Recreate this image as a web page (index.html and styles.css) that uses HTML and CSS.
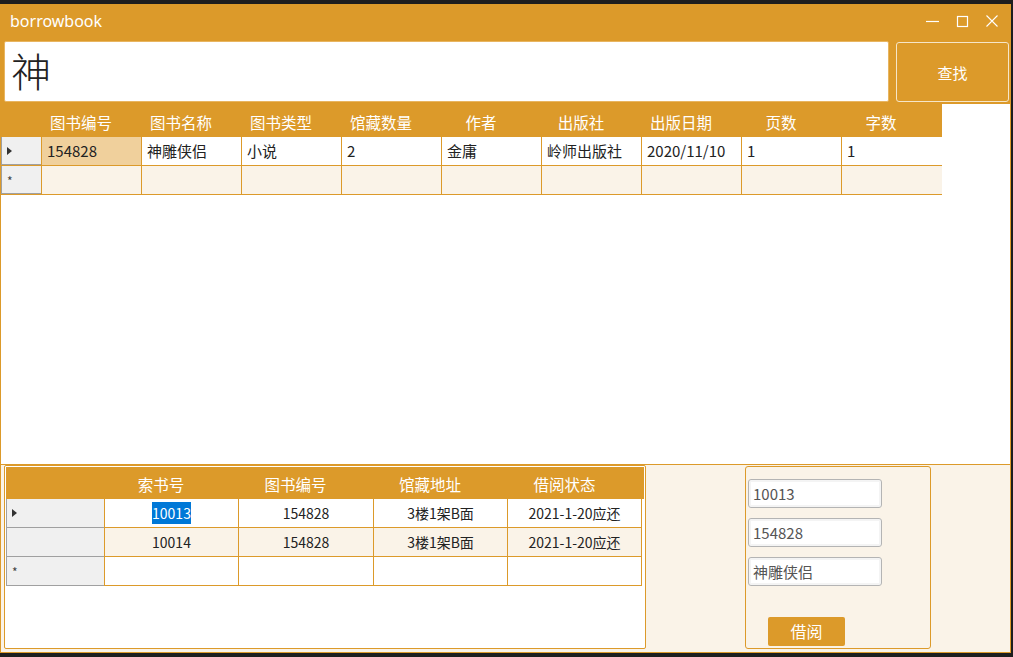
FILE: index.html
```html
<!DOCTYPE html>
<html lang="zh">
<head>
<meta charset="utf-8">
<title>borrowbook</title>
<link rel="stylesheet" href="styles.css">
</head>
<body>
<div class="window">
  <div class="titlebar">
    <span class="title">borrowbook</span>
    <div class="controls">
      <svg class="ctl" width="30" height="20" viewBox="0 0 30 20"><path d="M9 10.5H22" stroke="#fff" stroke-width="1.2"/></svg>
      <svg class="ctl" width="30" height="20" viewBox="0 0 30 20"><rect x="10.5" y="5.5" width="10" height="10" fill="none" stroke="#fff" stroke-width="1.2"/></svg>
      <svg class="ctl" width="30" height="20" viewBox="0 0 30 20"><path d="M9.5 4.5L20.5 15.5M20.5 4.5L9.5 15.5" stroke="#fff" stroke-width="1.1"/></svg>
    </div>
  </div>
  <div class="searchrow">
    <div class="searchbox">神</div>
    <div class="searchbtn">查找</div>
  </div>
  <div class="main">
    <div class="grid top">
      <div class="row head">
        <div class="rh"></div>
        <div class="c">图书编号</div><div class="c">图书名称</div><div class="c">图书类型</div>
        <div class="c">馆藏数量</div><div class="c">作者</div><div class="c">出版社</div>
        <div class="c">出版日期</div><div class="c">页数</div><div class="c">字数</div>
      </div>
      <div class="row">
        <div class="rh"><span class="tri"></span></div>
        <div class="c sel">154828</div><div class="c">神雕侠侣</div><div class="c">小说</div>
        <div class="c">2</div><div class="c">金庸</div><div class="c">岭师出版社</div>
        <div class="c">2020/11/10</div><div class="c">1</div><div class="c">1</div>
      </div>
      <div class="row new">
        <div class="rh"><span class="star">*</span></div>
        <div class="c"></div><div class="c"></div><div class="c"></div>
        <div class="c"></div><div class="c"></div><div class="c"></div>
        <div class="c"></div><div class="c"></div><div class="c"></div>
      </div>
    </div>
  </div>
  <div class="bottom">
    <div class="groupleft">
      <div class="grid low">
        <div class="row head">
          <div class="rh"></div>
          <div class="c">索书号</div><div class="c">图书编号</div><div class="c">馆藏地址</div><div class="c">借阅状态</div>
        </div>
        <div class="row">
          <div class="rh"><span class="tri"></span></div>
          <div class="c"><span class="hl">10013</span></div><div class="c">154828</div>
          <div class="c">3楼1架B面</div><div class="c">2021-1-20应还</div>
        </div>
        <div class="row alt">
          <div class="rh"></div>
          <div class="c">10014</div><div class="c">154828</div>
          <div class="c">3楼1架B面</div><div class="c">2021-1-20应还</div>
        </div>
        <div class="row">
          <div class="rh"><span class="star">*</span></div>
          <div class="c"></div><div class="c"></div><div class="c"></div><div class="c"></div>
        </div>
      </div>
    </div>
    <div class="groupright">
      <div class="tb">10013</div>
      <div class="tb">154828</div>
      <div class="tb">神雕侠侣</div>
      <div class="borrow">借阅</div>
    </div>
  </div>
</div>
</body>
</html>
```

FILE: styles.css
```css
* { box-sizing: border-box; }
html, body { margin: 0; padding: 0; }
body {
  background: #1e1e1e;
  width: 1013px;
  height: 657px;
  overflow: hidden;
  font-family: "Noto Sans CJK SC", "Noto Sans", sans-serif;
}
.window {
  margin-top: 4px;
  width: 1011px;
  height: 649px;
  background: #dc9a2a;
  border: 1px solid #dc9a2a;
  border-top: 0;
  display: flex;
  flex-direction: column;
}
.titlebar {
  height: 37px;
  flex-shrink: 0;
  display: flex;
  align-items: center;
  justify-content: space-between;
  padding-left: 9px;
}
.title {
  color: #fff;
  font-family: "Noto Sans", sans-serif;
  font-size: 16px;
  margin-top: -3px;
}
.controls { display: flex; padding-right: 3px; margin-top: -3px; }
.ctl { display: block; }
.searchrow {
  height: 63px;
  flex-shrink: 0;
  display: flex;
  align-items: stretch;
  padding: 0 1px 2px 3px;
  gap: 7px;
}
.searchbox {
  width: 885px;
  background: #fff;
  border: 1px solid #e8b560;
  border-radius: 2px;
  font-size: 40px;
  line-height: 56px;
  padding-left: 6px;
  color: #222;
  font-weight: 300;
}
.searchbtn {
  width: 113px;
  margin-top: 1px;
  border: 1px solid #f6e6c8;
  border-radius: 3px;
  color: #fff;
  font-size: 15px;
  display: flex;
  align-items: center;
  justify-content: center;
}
.main {
  height: 361px;
  flex-shrink: 0;
  background: #fff;
  border-bottom: 1px solid #dc9a2a;
}
.grid { display: flex; flex-direction: column; }
.row { display: flex; }
.top { width: 941px; }
.top .row { height: 29px; border-bottom: 1px solid #dc9a2a; }
.top .row.head { height: 33px; border-bottom: 0; background: #dc9a2a; }
.top .rh { width: 40px; }
.top .c {
  width: 100px;
  font-size: 15px;
  color: #222;
  line-height: 28px;
  padding-left: 5px;
  border-left: 1px solid #dc9a2a;
  white-space: nowrap;
}
.top .head .c {
  border-left: 0;
  color: #fff;
  text-align: center;
  padding: 0 20px 0 0;
  line-height: 36px;
  font-size: 15.5px;
}
.top .row.new { background: #faf3e8; }
.c.sel { background: #f0d09c; }
.rh {
  background: #f0f0f0;
  border-left: 1px solid #a0a0a0;
  border-bottom: 1px solid #a0a0a0;
  display: flex;
  align-items: center;
  padding-left: 5px;
  flex-shrink: 0;
}
.head .rh { background: transparent; border: 0; }
.tri {
  width: 0; height: 0;
  border-top: 4px solid transparent;
  border-bottom: 4px solid transparent;
  border-left: 5px solid #333;
}
.star { font-size: 12px; color: #444; line-height: 10px; margin-top: 2px; }
.bottom {
  flex: 1;
  background: #faf3e8;
  display: flex;
  align-items: flex-start;
  padding: 0 0 0 3px;
}
.groupleft {
  width: 642px;
  height: 184px;
  background: #fff;
  border: 1px solid #dc9a2a;
  border-radius: 2px;
  padding: 1px 1px 0 1px;
}
.low .row { height: 29px; }
.low .row.head { height: 32px; background: #dc9a2a; }
.low .rh { width: 98px; }
.low .c {
  width: 134px;
  border-left: 1px solid #dc9a2a;
  border-bottom: 1px solid #dc9a2a;
  text-align: center;
  font-size: 14px;
  line-height: 29px;
  color: #222;
  white-space: nowrap;
}
.low .c:nth-child(3) { width: 135px; }
.low .c:last-child { border-right: 1px solid #dc9a2a; width: 135px; }
.low .head .c {
  border: 0;
  color: #fff;
  font-size: 15.5px;
  line-height: 34px;
  padding-right: 20px;
}
.low .row.alt .c { background: #faf3e8; }
.hl { background: #0078d7; color: #fff; padding: 1px 0; }
.groupright {
  margin-left: 99px;
  margin-top: 1px;
  width: 186px;
  height: 183px;
  border: 1px solid #dc9a2a;
  border-radius: 3px;
  padding: 12px 0 0 2px;
  display: flex;
  flex-direction: column;
  gap: 10px;
}
.tb {
  width: 134px;
  height: 29px;
  border: 1px solid #b4b4b4;
  border-radius: 3px;
  background: #fff;
  box-shadow: inset 0 0 0 2px #f4f4f4;
  font-size: 15px;
  color: #555;
  line-height: 27px;
  padding-left: 4px;
}
.borrow {
  margin-top: 21px;
  margin-left: 20px;
  width: 77px;
  height: 29px;
  background: #dc9a2a;
  border-radius: 2px;
  color: #fff;
  font-size: 16px;
  text-align: center;
  line-height: 29px;
}
```
